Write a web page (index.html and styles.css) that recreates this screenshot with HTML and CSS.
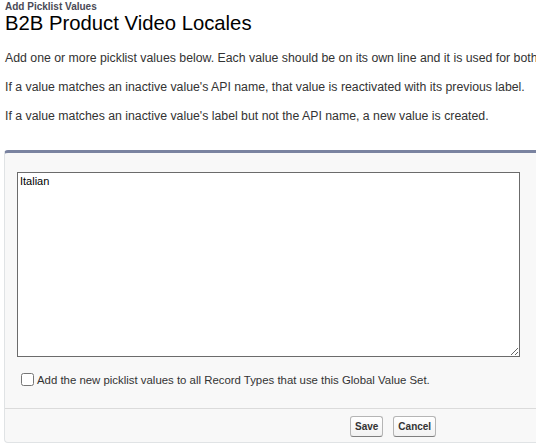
FILE: index.html
```html
<!DOCTYPE html>
<html>
<head>
<meta charset="utf-8">
<link rel="stylesheet" href="styles.css">
</head>
<body>
<div class="page">
  <div class="page-head">
    <div class="page-type">Add Picklist Values</div>
    <h1 class="page-title">B2B Product Video Locales</h1>
  </div>
  <div class="intro">
    <p>Add one or more picklist values below. Each value should be on its own line and it is used for both the label and the API name.</p>
    <p>If a value matches an inactive value's API name, that value is reactivated with its previous label.</p>
    <p>If a value matches an inactive value's label but not the API name, a new value is created.</p>
  </div>
  <div class="panel">
    <div class="panel-body">
      <textarea class="values">Italian</textarea>
      <label class="check-row"><input type="checkbox" class="check"><span>Add the new picklist values to all Record Types that use this Global Value Set.</span></label>
    </div>
    <div class="panel-foot">
      <div class="buttons">
        <button class="btn">Save</button>
        <button class="btn">Cancel</button>
      </div>
    </div>
  </div>
</div>
</body>
</html>
```

FILE: styles.css
```css
html, body {
  margin: 0;
  padding: 0;
  background: #fff;
  overflow: hidden;
}
body {
  font-family: Arial, "Liberation Sans", Helvetica, sans-serif;
  color: #333;
  width: 536px;
  height: 448px;
}
.page {
  width: 800px;
  padding: 1px 0 0 5px;
}
.page-type {
  font-size: 10px;
  font-weight: bold;
  color: #4a4a56;
  line-height: 11px;
}
.page-title {
  margin: 0;
  font-size: 20.3px;
  font-weight: normal;
  color: #000;
  line-height: 22px;
}
.intro {
  padding-top: 18px;
}
.intro p {
  margin: 0 0 16px;
  font-size: 12.3px;
  line-height: 13px;
  color: #333;
  white-space: nowrap;
}
.panel {
  margin-top: 27px;
  margin-left: -1px;
  background: #f8f8f8;
  border-top: 3px solid #7a83a0;
  border-left: 1px solid #e0e3e5;
  border-bottom: 1px solid #e0e3e5;
  border-radius: 4px 0 0 4px;
  width: 760px;
}
.panel-body {
  padding: 19px 0 0 12px;
}
.values {
  display: block;
  box-sizing: border-box;
  width: 503px;
  height: 185px;
  margin: 0;
  border: 1px solid #6b6b6b;
  padding: 2px 2px;
  font-family: Arial, "Liberation Sans", sans-serif;
  font-size: 11px;
  color: #000;
  background: #fff;
  resize: both;
}
.check-row {
  display: flex;
  align-items: center;
  gap: 3px;
  padding: 16px 0 22px 4px;
  font-size: 11.4px;
  color: #333;
}
.check {
  margin: 0;
  width: 13px;
  height: 13px;
}
.panel-foot {
  border-top: 1px solid #dbdbdb;
  height: 33px;
}
.buttons {
  width: 536px;
  display: flex;
  justify-content: flex-start;
  gap: 10px;
  padding: 7px 0 0 345px;
  box-sizing: border-box;
}
.btn {
  font-family: Arial, "Liberation Sans", sans-serif;
  font-size: 10px;
  font-weight: bold;
  color: #333;
  height: 21px;
  padding: 0 4px;
  border: 1px solid #b5b5b5;
  border-bottom-color: #7f7f7f;
  border-radius: 3px;
  background: linear-gradient(#fff, #f2f2f2);
}
```
